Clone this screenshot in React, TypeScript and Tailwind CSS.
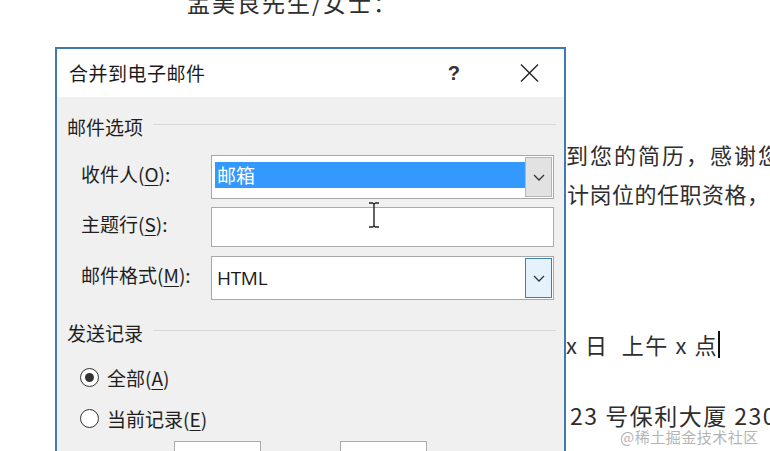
const CJK = "font-['Noto_Sans_CJK_SC',sans-serif]"

function Chevron() {
    return (
        <svg width="12" height="7" viewBox="0 0 12 7" fill="none">
            <path d="M1 1l5 5 5-5" stroke="#333" strokeWidth="1.3" />
        </svg>
    )
}

function Radio({ checked }: { checked?: boolean }) {
    return (
        <span className="w-[19px] h-[19px] rounded-full border-[1.5px] border-[#333] bg-white flex items-center justify-center shrink-0">
            {checked && <span className="w-[9px] h-[9px] rounded-full bg-[#333]" />}
        </span>
    )
}

function GroupHeader({ label }: { label: string }) {
    return (
        <div className="flex items-center gap-[10px] h-[20px]">
            <span className="text-[19px] leading-none text-[#1e1e1e]">{label}</span>
            <span className="flex-1 h-px bg-[#d8d8d8] -mt-[3px]" />
        </div>
    )
}

function FieldRow({ label, hotkey, children }: { label: string; hotkey: string; children: React.ReactNode }) {
    return (
        <div className="flex items-center">
            <span className="w-[144px] pl-[14px] mb-[8px] text-[19px] leading-none text-[#1e1e1e] whitespace-nowrap">
                {label}(<span className="underline underline-offset-[3px]">{hotkey}</span>):
            </span>
            {children}
        </div>
    )
}

function MergeDialog() {
    return (
        <div className={`absolute left-[55px] top-[47px] w-[511px] h-[430px] border-2 border-[#3f7bb0] bg-[#f0f0f0] ${CJK}`}>
            {/* Title bar */}
            <div className="h-[48px] bg-white flex items-center pl-[12px] pr-[25px]">
                <span className="flex-1 text-[19px] text-[#1a1a1a] tracking-[0.5px]">合并到电子邮件</span>
                <span className="text-[20px] font-bold text-[#333] font-['Liberation_Sans',sans-serif]">?</span>
                <svg className="ml-[60px]" width="19" height="18" viewBox="0 0 19 18" fill="none">
                    <path d="M1 0.5l17 17M18 0.5l-17 17" stroke="#222" strokeWidth="1.4" />
                </svg>
            </div>

            {/* Body */}
            <div className="pl-[10px] pr-[8px] pt-[19px]">
                <GroupHeader label="邮件选项" />

                <div className="mt-[19px] flex flex-col">
                    <FieldRow label="收件人" hotkey="O">
                        <div className="relative w-[343px] h-[44px] border border-[#a8a8a8] bg-white flex items-center pl-[3px] pr-[28px]">
                            <div className="flex-1 h-[26px] -mt-[4px] bg-[#3399ff] flex items-center pl-[2px] text-[19px] text-white">
                                邮箱
                            </div>
                            <div className="absolute right-px top-px bottom-px w-[27px] bg-[#e2e2e2] border border-[#b5b5b5] flex items-center justify-center">
                                <Chevron />
                            </div>
                        </div>
                    </FieldRow>

                    <div className="mt-[8px]">
                        <FieldRow label="主题行" hotkey="S">
                            <div className="w-[343px] h-[40px] border border-[#ababab] bg-white" />
                        </FieldRow>
                    </div>

                    <div className="mt-[9px]">
                        <FieldRow label="邮件格式" hotkey="M">
                            <div className="relative w-[343px] h-[44px] border border-[#a8a8a8] bg-white flex items-center pl-[5px]">
                                <span className="text-[19px] text-[#1a1a1a] font-['Open_Sans',sans-serif] tracking-[-0.3px]">HTML</span>
                                <div className="absolute right-px top-px bottom-px w-[27px] bg-[#e5f1fb] border-[1.5px] border-[#3c7fb1] flex items-center justify-center">
                                    <Chevron />
                                </div>
                            </div>
                        </FieldRow>
                    </div>
                </div>

                <div className="mt-[22px]">
                    <GroupHeader label="发送记录" />
                </div>

                <div className="mt-[23px] flex flex-col pl-[13px] text-[19px] text-[#1e1e1e]">
                    <label className="h-[24px] flex items-center gap-[8px]">
                        <Radio checked />
                        <span className="leading-none">全部(<span className="underline underline-offset-[3px]">A</span>)</span>
                    </label>
                    <label className="mt-[17px] h-[24px] flex items-center gap-[8px]">
                        <Radio />
                        <span className="leading-none">当前记录(<span className="underline underline-offset-[3px]">E</span>)</span>
                    </label>
                    <div className="mt-[11px] h-[32px] flex items-center">
                        <span className="mt-[8px]"><Radio /></span>
                        <span className="ml-[8px] w-[67px] leading-none mt-[8px]">从(F):</span>
                        <span className="w-[87px] h-[32px] border border-[#ababab] bg-white" />
                        <span className="ml-[18px] w-[61px] leading-none mt-[8px]">到(T):</span>
                        <span className="w-[87px] h-[32px] border border-[#ababab] bg-white" />
                    </div>
                </div>
            </div>

            {/* Mouse I-beam over subject box */}
            <svg className="absolute left-[311px] top-[153px]" width="12" height="26" viewBox="0 0 12 26" fill="none">
                <path d="M1 1h4M7 1h4M6 1.5v23M1 25h4M7 25h4M5 1.5c.6 0 1 .3 1 .8M7 1.5c-.6 0-1 .3-1 .8M5 24.5c.6 0 1-.3 1-.8M7 24.5c-.6 0-1-.3-1-.8" stroke="#222" strokeWidth="1.4" />
            </svg>
        </div>
    )
}

export default function App() {
    return (
        <div className={`relative w-[770px] h-[451px] overflow-hidden bg-white ${CJK}`}>
            {/* Word document behind the dialog */}
            <div className="flex flex-col text-[22px] text-[#2e2e2e] leading-[39px] whitespace-nowrap">
                <p className="h-[39px] -mt-[17px] pl-[187px] text-[23px] tracking-[2px]">孟美良先生/女士：</p>
                <p className="h-[39px] mt-[113px] pl-[566px] tracking-[2px]">到您的简历，感谢您对本公司的关注</p>
                <p className="h-[39px] pl-[567px] tracking-[0.5px]">计岗位的任职资格，</p>
                <p className="h-[39px] mt-[112px] pl-[566px] flex items-center">
                    <span className="tracking-[1.6px]">x 日&nbsp;&nbsp;上午 x 点</span>
                    <span className="w-[2px] h-[27px] bg-[#111]" />
                </p>
                <p className="h-[39px] mt-[32px] pl-[570px] text-[23px] tracking-[1.5px]">23 号保利大厦 2302</p>
            </div>

            <MergeDialog />

            <span className="absolute left-[620px] top-[426px] text-[15px] leading-[22px] text-[#b4b4b4] tracking-[0.5px]">
                @稀土掘金技术社区
            </span>
        </div>
    )
}
